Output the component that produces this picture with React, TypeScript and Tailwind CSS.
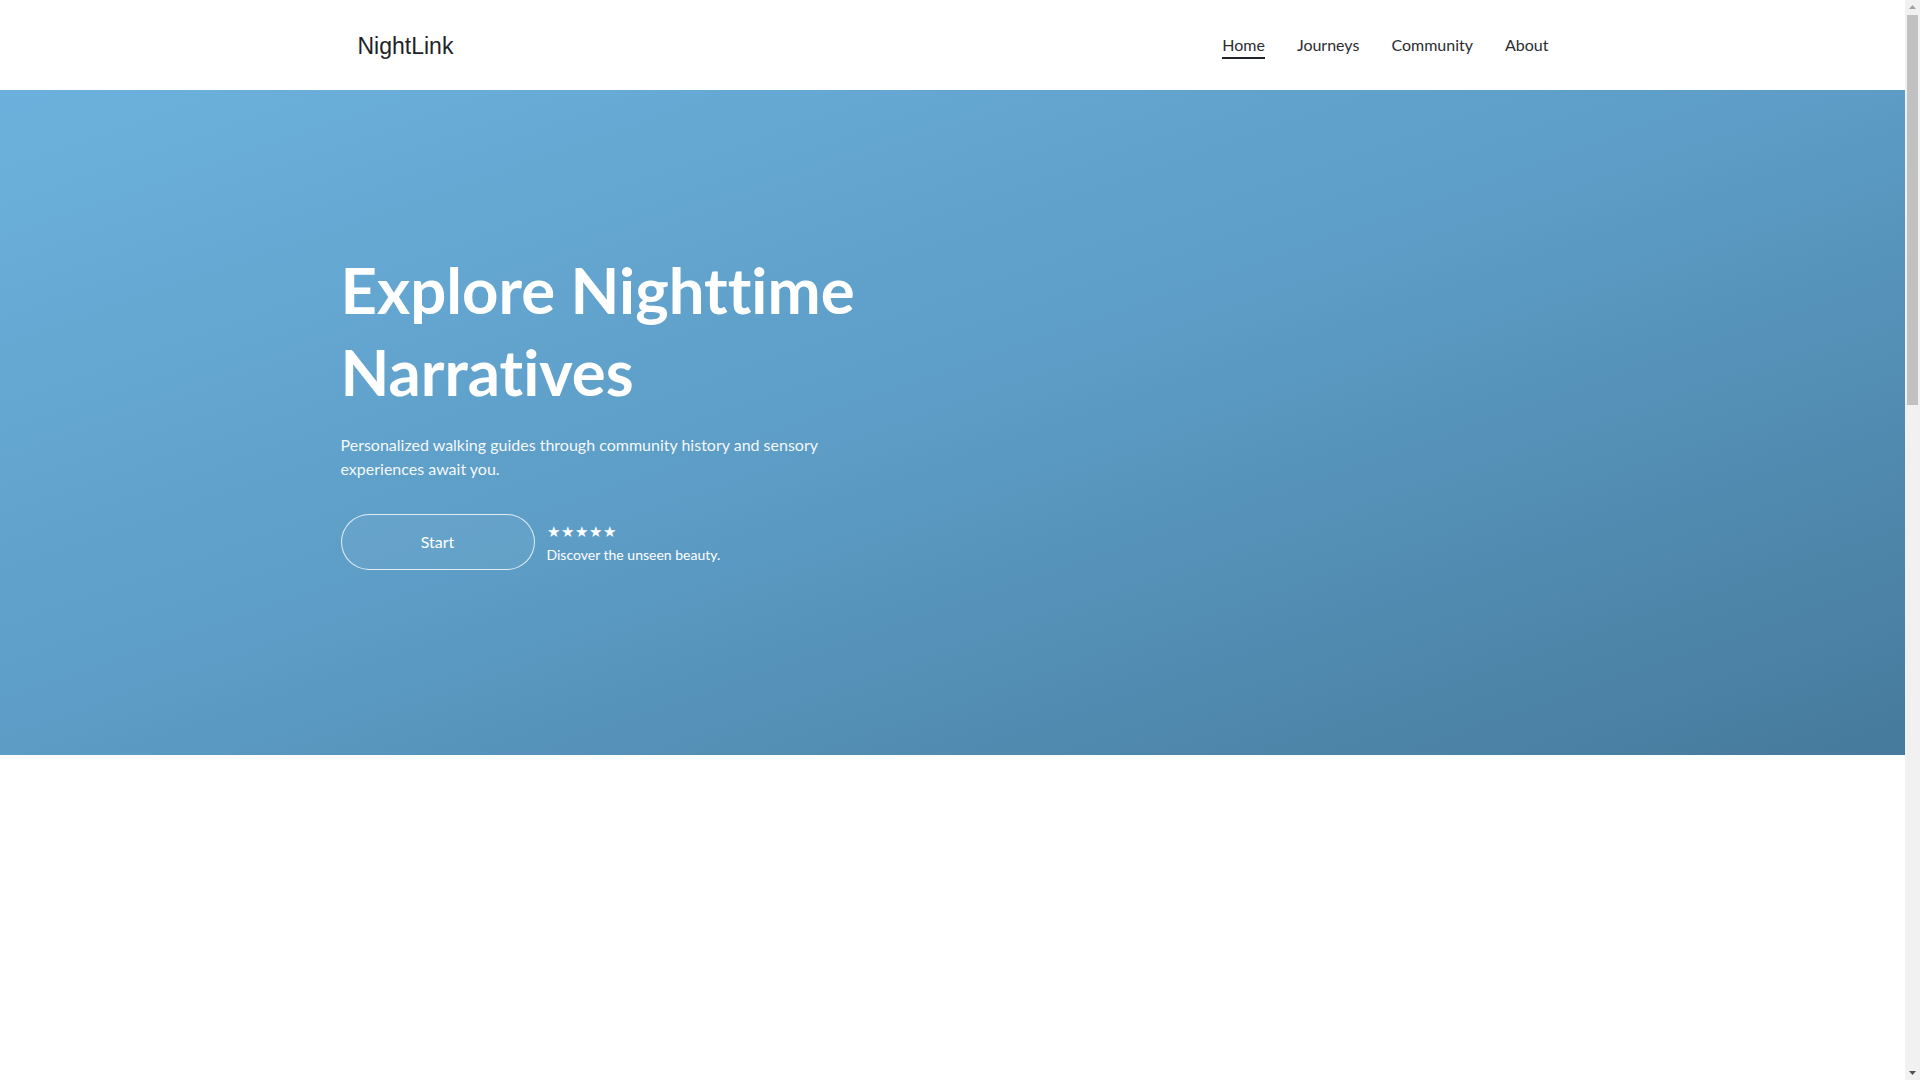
import React from "react";

const links = ["Home", "Journeys", "Community", "About"];

function Header() {
  return (
    <header className="bg-white h-[90px]">
      <div className="w-[1200px] mx-auto h-full flex items-center justify-between">
        <a className="text-[23px] text-[#1f2328] font-['Liberation_Sans',Arial,sans-serif] pl-[5px] mt-[2px]">
          NightLink
        </a>
        <nav className="flex items-center gap-8 pr-[4px]">
          {links.map((l, i) => (
            <a
              key={l}
              className={
                "text-[16px] leading-6 text-[#2a2d31] mt-[2px] " +
                (i === 0 ? "border-b-2 border-[#1f2328]" : "border-b-2 border-transparent")
              }
            >
              {l}
            </a>
          ))}
        </nav>
      </div>
    </header>
  );
}

function Hero() {
  return (
    <section className="h-[665px] bg-linear-to-br from-[#6cb1dd] via-[#5c9cc5] to-[#467a9c] flex items-center">
      <div className="w-[1224px] mx-auto">
        <div className="w-[620px] text-white mt-[-27px]">
          <h1 className="text-[63.5px] leading-[82px] font-bold [font-variant-ligatures:none]">
            Explore Nighttime Narratives
          </h1>
          <p className="mt-[20px] text-[16px] leading-[1.5] text-white/95 w-[540px]">
            Personalized walking guides through community history and sensory experiences await
            you.
          </p>
          <div className="mt-[33px] flex items-center gap-3">
            <button className="w-[194px] h-[56px] rounded-full border border-white/80 bg-white/5 text-[16px] text-white">
              Start
            </button>
            <div className="flex flex-col mt-[3px]">
              <span className="text-[15px] leading-5 tracking-[1px]">★★★★★</span>
              <span className="text-[14px] leading-5 mt-[4px]">Discover the unseen beauty.</span>
            </div>
          </div>
        </div>
      </div>
    </section>
  );
}

// stand-in for the browser scrollbar seen in the screenshot
function ScrollBar() {
  return (
    <div className="fixed top-0 right-0 w-[15px] h-screen bg-[#f1f1f1] flex flex-col items-center">
      <svg width="9" height="15" viewBox="0 0 9 15" className="shrink-0">
        <path d="M1 9 L4.5 5 L8 9 Z" fill="#a3a3a3" />
      </svg>
      <div className="w-[11px] h-[390px] bg-[#c1c1c1]" />
      <div className="flex-1" />
      <svg width="9" height="15" viewBox="0 0 9 15" className="shrink-0">
        <path d="M1 6 L4.5 10 L8 6 Z" fill="#505050" />
      </svg>
    </div>
  );
}

export default function App() {
  return (
    <div className="w-[1905px] min-h-screen bg-white font-['Lato','Noto_Sans',sans-serif]">
      <Header />
      <Hero />
      <section className="h-[2150px] bg-white" />
      <ScrollBar />
    </div>
  );
}
